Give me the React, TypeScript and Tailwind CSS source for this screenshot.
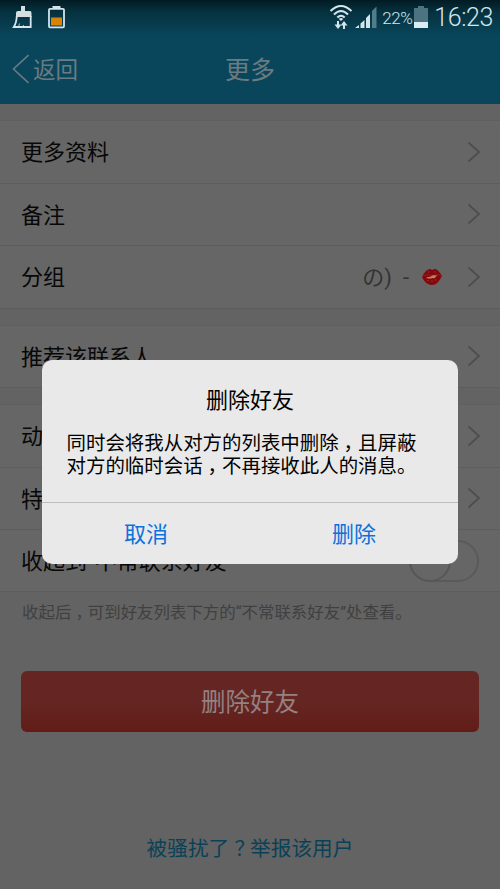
import type { ReactNode } from 'react';

const Chevron = () => (
    <svg width="14" height="22" viewBox="0 0 14 22" fill="none" stroke="#4d4d4d" strokeWidth="1.7">
        <path d="M1.5 1.5 L12 11 L1.5 20.5" />
    </svg>
);

// Half-width punctuation padded back to a full em so the mark sits in the middle
const Mark = ({ children }: { children: string }) => (
    <span className="px-[0.25em] [font-feature-settings:'halt']">{children}</span>
);

const Row = ({ label, value }: { label: string; value?: ReactNode }) => (
    <div className="flex h-[62.5px] items-center justify-between border-b border-[#5d5d5d] pl-[21px] pr-[19px]">
        <span className="pt-0.5">{label}</span>
        <div className="flex items-center gap-6">
            {value}
            <Chevron />
        </div>
    </div>
);

const Lips = () => (
    <svg width="22" height="18" viewBox="0 0 22 18">
        <path d="M1 9 C3 5 6 1 9 1 C10 1 10.5 2 11.5 2 C12.5 1 13.5 .8 14.5 1 C17 2 19 5 21 7.5 C19 12 16 17 11 17 C6 17 3 13 1 9Z" fill="#84070c" />
        <path d="M1 9 C5 6 8 7 11 7.5 C14 7 17 6 21 7.5" fill="none" stroke="#96292a" strokeWidth=".8" />
        <path d="M5 10 C7 8.5 8.5 9 10 8.5 C12 6.5 14 7.5 16.5 7.5 C14.5 8.5 14 11 11.5 10 C9 11 7.5 10.5 5 10Z" fill="#b58a63" />
        <path d="M6 13 L8 12 M11 14.5 V12 M15 13 L14 11 M7 5 L8 3 M14 5 L14 3" stroke="#a7383a" strokeWidth=".7" />
    </svg>
);

const StatusBar = () => (
    <div className="flex h-9 items-start justify-between pl-3 pr-[7px] text-[#d3e6ec]">
        <div className="flex gap-4 pt-[5px]">
            <svg width="20" height="24" viewBox="0 0 20 24" fill="none">
                <path d="M9 1 H13 V6 H18 Q19.5 6 19.5 8 V12 H4 V8 Q4 6 6 6 H9Z" fill="#d5dfe2" />
                <path d="M4.8 11 Q4.5 18 1.8 22 H18.7 V11" stroke="#d5e6ec" strokeWidth="1.8" />
                <path d="M6.5 22 L7.5 18.5 M11 22 L11.5 20" stroke="#d5e6ec" strokeWidth=".8" />
            </svg>
            <svg width="17" height="24" viewBox="0 0 17 24">
                <path d="M4.5 1 H12.5 V4 H4.5Z" fill="#d3e4ea" />
                <rect x="1" y="3.8" width="15" height="18.5" rx="1" fill="none" stroke="#d3e4ea" strokeWidth="1.8" />
                <rect x="3" y="12.5" width="11" height="8" fill="#d98206" />
            </svg>
        </div>
        <div className="flex">
            <svg className="mt-1" width="24" height="26" viewBox="0 0 24 26" fill="none" stroke="currentColor">
                <path d="M1.5 7 Q12 -3 22.5 7 M5 10.5 Q12 3.5 19 10.5 M8.3 13.5 Q12 9.8 15.7 13.5" strokeWidth="2" />
                <path d="M9.8 15 Q12 13 14.2 15 L12 17Z" fill="currentColor" stroke="none" />
                <path d="M9 17 V23 M15 25 V19" strokeWidth="2" />
                <path d="M5.5 20.5 H12.5 L9 25Z M11.5 21.5 H18.5 L15 17Z" fill="currentColor" stroke="none" />
            </svg>
            <svg className="ml-[2px] mt-[6px]" width="22" height="23" viewBox="0 0 22 23" fill="currentColor">
                <path d="M0 22 L4 19 V22Z M5.5 17.5 L9.5 14 V22 H5.5Z M11 12 L15 8 V22 H11Z" />
                <path d="M17 5 L21.5 .5 V22 H17Z" fill="#4f7d8c" />
            </svg>
            <span className="ml-[5px] mt-[8px] w-[32px] whitespace-nowrap text-[17px] font-light leading-[20px] tracking-[-0.5px]">22%</span>
            <svg className="mt-[6px]" width="14" height="22" viewBox="0 0 14 22">
                <path d="M4 0 H10 V2 H14 V22 H0 V2 H4Z" fill="#4e7380" />
                <rect y="16" width="14" height="6" fill="#d8edf3" />
            </svg>
            <span className="ml-[6px] mt-[4px] text-[25px] font-light leading-[28px] tracking-[-0.4px]">16:23</span>
        </div>
    </div>
);

const Dialog = () => (
    <div className="absolute left-[42px] top-[360px] flex h-[204px] w-[416px] flex-col rounded-[10px] bg-[#e9e9e9] text-black">
        <h2 className="mt-[26px] text-center text-[22px] leading-[30px]">删除好友</h2>
        <p className="mt-[16px] whitespace-nowrap pl-[24.5px] text-[19.45px] leading-[23px]">
            同时会将我从对方的列表中删除<Mark>，</Mark>且屏蔽
            <br />
            对方的临时会话<Mark>，</Mark>不再接收此人的消息。
        </p>
        <div className="mt-auto flex h-[62px] border-t border-[#bdbdbd] pt-0.5 text-[22px] text-[#0b72dc]">
            <button className="flex-1">取消</button>
            <button className="flex-1">删除</button>
        </div>
    </div>
);

export default function App() {
    return (
        <div className="relative h-[889px] w-[500px] overflow-hidden bg-[#636363] font-[Roboto,'Noto_Sans_CJK_SC',sans-serif] text-[22px] text-[#080808]">
            <header className="h-[104px] bg-[linear-gradient(#011b23_0px,#06313f_12px,#09465b_36px)]">
                <StatusBar />
                <div className="grid h-[66px] grid-cols-3 items-center text-[#6a7b82]">
                    <div className="flex items-center gap-1 pl-3 text-[22.5px]">
                        <svg width="17" height="30" viewBox="0 0 17 30" fill="none" stroke="currentColor" strokeWidth="1.6">
                            <path d="M16.5 1 L1.5 15 L16.5 29" />
                        </svg>
                        <span className="pt-[3px]">返回</span>
                    </div>
                    <h1 className="pt-[3px] text-center text-[25px]">更多</h1>
                </div>
            </header>

            {/* Contact settings */}
            <section className="mt-4 border-t border-[#5f5f5f] bg-[#666666]">
                <Row label="更多资料" />
                <Row label="备注" />
                <Row
                    label="分组"
                    value={
                        <div className="flex items-center text-[#343434]">
                            <span className="pt-0.5">の)</span>
                            <span className="ml-[11px] pt-0.5">-</span>
                            <span className="ml-[12px]">
                                <Lips />
                            </span>
                        </div>
                    }
                />
            </section>
            <section className="mt-4 border-t border-[#5f5f5f] bg-[#666666]">
                <Row label="推荐该联系人" />
            </section>
            <section className="mt-4 border-t border-[#5f5f5f] bg-[#666666]">
                <Row label="动态" />
                <Row label="特别关心" />
                <div className="flex h-[62px] items-center justify-between border-b border-[#5d5d5d] pl-[21px] pr-[21px]">
                    <span className="pt-0.5">收起到“不常联系好友”</span>
                    <div className="h-[42px] w-[70px] rounded-full border-2 border-[#5a5a5a]">
                        <div className="-ml-0.5 -mt-0.5 size-[42px] rounded-full border-2 border-[#575757]" />
                    </div>
                </div>
            </section>
            <p className="mt-[9px] whitespace-nowrap pl-[22px] text-[16.45px] leading-[24px] text-[#404040]">
                收起后<Mark>，</Mark>可到好友列表下方的“不常联系好友”处查看。
            </p>

            <button className="mx-[21px] mt-[46px] block h-[61px] w-[458px] rounded-md bg-[linear-gradient(#652623_50%,#621c17)] pt-1 text-[24.5px] text-[#948180]">
                删除好友
            </button>
            <a className="mt-[101px] block text-center text-[20.7px] leading-[32px] text-[#0b4157]">
                被骚扰了<Mark>？</Mark>举报该用户
            </a>

            <Dialog />
        </div>
    );
}
